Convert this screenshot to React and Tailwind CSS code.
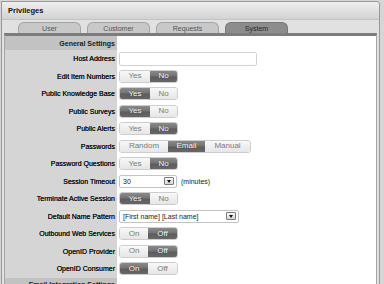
import React from "react";

const font = { fontFamily: '"Liberation Sans", Arial, sans-serif' };

function Toggle({ items, active }) {
  return (
    <div className="flex h-[13px] rounded-[3px] border border-[#cdcdcd] overflow-hidden">
      {items.map(([label, w], i) => (
        <div
          key={label}
          style={{ width: w }}
          className={
            i === active
              ? "flex items-center justify-center text-[8px] leading-none text-white bg-[linear-gradient(to_bottom,#8a8a8a_0%,#727272_48%,#5c5c5c_52%,#676767_100%)] [text-shadow:0_0_1px_#333]"
              : "flex items-center justify-center text-[8px] leading-none text-[#7a7a7a] bg-[linear-gradient(to_bottom,#f8f8f8,#e6e6e6)]"
          }
        >
          {label}
        </div>
      ))}
    </div>
  );
}

function Select({ value, width }) {
  return (
    <div
      style={{ width }}
      className="flex items-center h-[13px] border border-[#c4c4c4] rounded-[2px] bg-white pl-[3px] pr-[2px]"
    >
      <span className="flex-1 text-[7px] leading-none text-[#222]">{value}</span>
      <div className="w-[10px] h-[8px] border border-[#7a7a7a] rounded-[1px] bg-[linear-gradient(to_bottom,#fafafa,#d6d6d6)] flex items-center justify-center">
        <div className="w-0 h-0 border-l-[2.5px] border-r-[2.5px] border-t-[3px] border-l-transparent border-r-transparent border-t-[#111]" />
      </div>
    </div>
  );
}

function Row({ label, children }) {
  return (
    <div className="flex h-[17.5px] shrink-0">
      <div className="w-[112px] bg-[#d5d5d5] flex items-center justify-end pr-[2px] text-[7px] leading-none text-[#111] [text-shadow:0_0_0.3px_#111]">
        {label}
      </div>
      <div className="flex-1 flex items-center pl-[2px] gap-[4px]">{children}</div>
    </div>
  );
}

function Header({ label }) {
  return (
    <div className="flex h-[14px] shrink-0">
      <div className="w-[112px] bg-[#c2c2c2] flex items-center justify-end pr-[2px] text-[7px] leading-none font-bold text-[#1a1a1a]">
        {label}
      </div>
      <div className="flex-1 bg-white" />
    </div>
  );
}

const YN = [["Yes", 30], ["No", 27]];
const ONOFF = [["On", 28], ["Off", 29]];

export default function App() {
  const tabs = ["User", "Customer", "Requests", "System"];
  return (
    <div
      style={font}
      className="w-[384px] h-[284px] overflow-hidden bg-[#d6d6d6] pl-[1px] pt-[1px] pr-[4px] flex"
    >
      <div className="flex-1 flex flex-col border-l border-t border-r border-[#999] rounded-tr-[4px] bg-[#e1e1e1] overflow-hidden">
        <div className="h-[18px] shrink-0 flex items-center pl-[6px] bg-[linear-gradient(to_bottom,#efefef,#d2d2d2)] border-b border-[#c4c4c4] text-[7.5px] font-bold text-[#111]">
          Privileges
        </div>
        <div className="h-[13px] shrink-0 flex items-end pl-[16px] gap-[6px]">
          {tabs.map((t) => (
            <div
              key={t}
              className={
                t === "System"
                  ? "w-[63px] h-[11px] rounded-t-[6px] border border-b-0 border-[#777] bg-[#8c8c8c] flex items-center justify-center text-[7px] leading-none text-[#2a2a2a]"
                  : "w-[63px] h-[11px] rounded-t-[6px] border border-b-0 border-[#a4a4a4] bg-[#c8c8c8] flex items-center justify-center text-[7px] leading-none text-[#555]"
              }
            >
              {t}
            </div>
          ))}
        </div>
        <div className="flex-1 mx-[2px] flex flex-col border-t-[3px] border-t-[#7c7c7c] border-l border-r border-[#a6a6a6] bg-white overflow-hidden">
          <Header label="General Settings" />
          <Row label="Host Address">
            <div className="w-[138px] h-[14px] border border-[#d2d2d2] rounded-[2px] bg-white" />
          </Row>
          <Row label="Edit Item Numbers">
            <Toggle items={YN} active={1} />
          </Row>
          <Row label="Public Knowledge Base">
            <Toggle items={YN} active={0} />
          </Row>
          <Row label="Public Surveys">
            <Toggle items={YN} active={0} />
          </Row>
          <Row label="Public Alerts">
            <Toggle items={YN} active={1} />
          </Row>
          <Row label="Passwords">
            <Toggle items={[["Random", 48], ["Email", 37], ["Manual", 45]]} active={1} />
          </Row>
          <Row label="Password Questions">
            <Toggle items={YN} active={1} />
          </Row>
          <Row label="Session Timeout">
            <Select value="30" width={58} />
            <span className="text-[7px] leading-none text-[#222]">(minutes)</span>
          </Row>
          <Row label="Terminate Active Session">
            <Toggle items={YN} active={0} />
          </Row>
          <Row label="Default Name Pattern">
            <Select value="[First name] [Last name]" width={120} />
          </Row>
          <Row label="Outbound Web Services">
            <Toggle items={ONOFF} active={1} />
          </Row>
          <Row label="OpenID Provider">
            <Toggle items={ONOFF} active={1} />
          </Row>
          <Row label="OpenID Consumer">
            <Toggle items={ONOFF} active={0} />
          </Row>
          <Header label="Email Integration Settings" />
        </div>
      </div>
    </div>
  );
}
